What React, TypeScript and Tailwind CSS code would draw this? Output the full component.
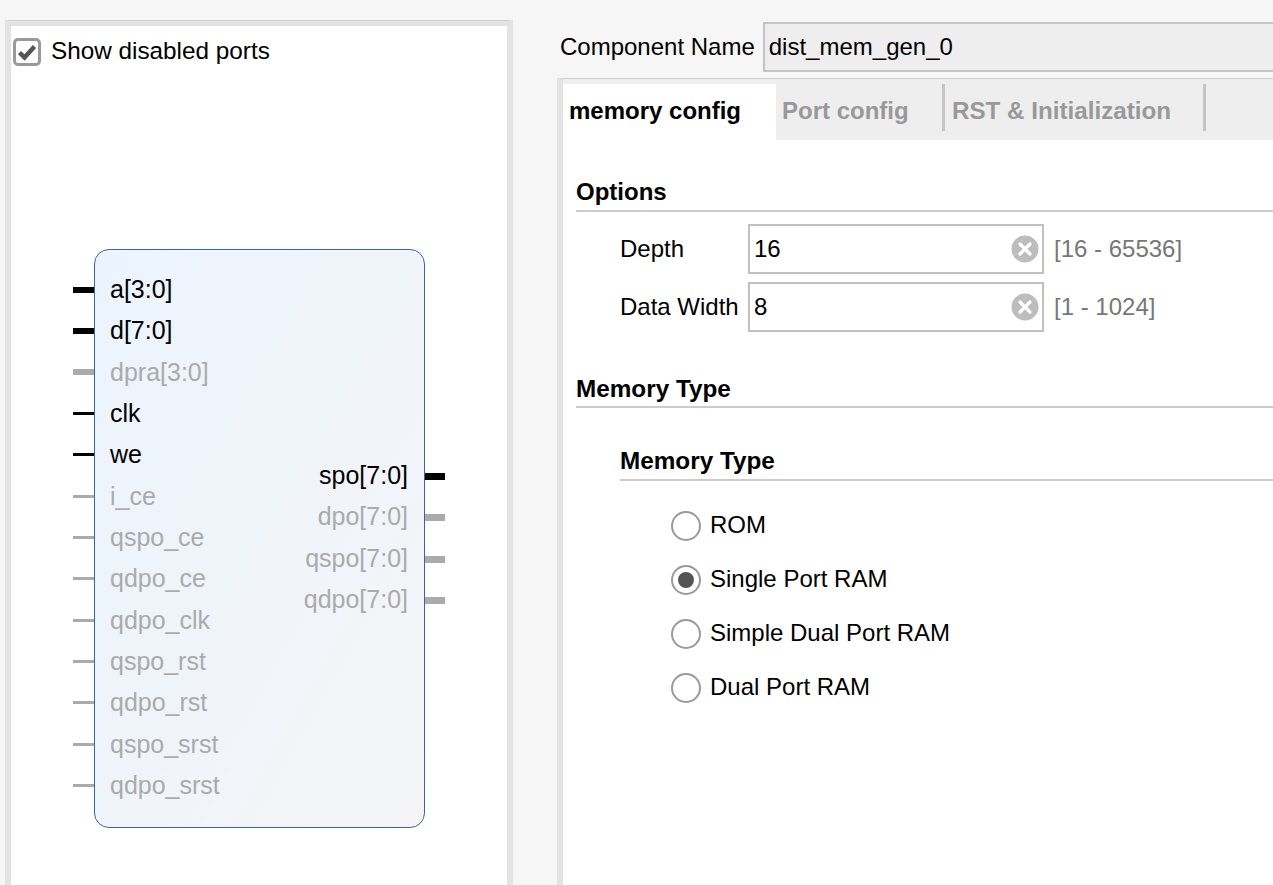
const leftPorts = [
  { name: "a[3:0]", on: true, bus: true },
  { name: "d[7:0]", on: true, bus: true },
  { name: "dpra[3:0]", on: false, bus: true },
  { name: "clk", on: true, bus: false },
  { name: "we", on: true, bus: false },
  { name: "i_ce", on: false, bus: false },
  { name: "qspo_ce", on: false, bus: false },
  { name: "qdpo_ce", on: false, bus: false },
  { name: "qdpo_clk", on: false, bus: false },
  { name: "qspo_rst", on: false, bus: false },
  { name: "qdpo_rst", on: false, bus: false },
  { name: "qspo_srst", on: false, bus: false },
  { name: "qdpo_srst", on: false, bus: false },
];

const rightPorts = [
  { name: "spo[7:0]", on: true },
  { name: "dpo[7:0]", on: false },
  { name: "qspo[7:0]", on: false },
  { name: "qdpo[7:0]", on: false },
];

const radios = [
  { label: "ROM", checked: false },
  { label: "Single Port RAM", checked: true },
  { label: "Simple Dual Port RAM", checked: false },
  { label: "Dual Port RAM", checked: false },
];

const Pin = ({ on, size }: { on: boolean; size: string }) => (
  <div className="h-[41.33px] flex items-center">
    <div className={`${size} ${on ? "bg-black" : "bg-[#ababab]"}`} />
  </div>
);

const ValueField = ({ label, value, range }: { label: string; value: string; range: string }) => (
  <div className="flex items-center h-[50px]">
    <div className="w-[172px] pl-[44px] shrink-0 whitespace-nowrap">{label}</div>
    <div className="w-[296px] h-[50px] border-2 border-[#c0c0c0] bg-white flex items-center justify-between pl-[4px] pr-[3px]">
      <span>{value}</span>
      <svg width="28" height="28" viewBox="0 0 28 28">
        <circle cx="14" cy="14" r="13.5" fill="#bdbdbd" />
        <path d="M9 9L19 19M19 9L9 19" stroke="#fff" strokeWidth="3.2" strokeLinecap="round" />
      </svg>
    </div>
    <span className="ml-[10px] text-[#777777] whitespace-nowrap">{range}</span>
  </div>
);

const Radio = ({ label, checked }: { label: string; checked: boolean }) => (
  <div className="h-[54px] flex items-center">
    <div className="w-[30px] h-[30px] rounded-full border-2 border-[#999999] bg-white flex items-center justify-center">
      {checked && <div className="w-[16px] h-[16px] rounded-full bg-[#555555]" />}
    </div>
    <span className="ml-[9px] pb-[2px] whitespace-nowrap">{label}</span>
  </div>
);

export default function App() {
  return (
    <div className="w-[1273px] h-[885px] overflow-hidden bg-[#f6f6f6] flex text-[24px] text-black font-['Liberation_Sans',Arial,sans-serif]">
      {/* Symbol panel */}
      <div className="w-[513px] shrink-0 pt-[20px] pl-[5px]">
        <div className="h-[880px] border-t border-[#cfcfcf] border-l-[6px] border-l-[#e3e3e3] border-r-[6px] border-r-[#e3e3e3] bg-white">
          <div className="h-[5px] bg-[#e3e3e3]" />
          <div className="flex items-center pl-[2px] pt-[11px] h-[40px]">
            <div className="w-[28px] h-[28px] rounded-[5px] border-[3px] border-[#999999] flex items-center justify-center">
              <svg width="22" height="22" viewBox="0 0 22 22" className="shrink-0">
                <path d="M3.5 11.5L8.5 16.5L18.5 5.5" fill="none" stroke="#555555" strokeWidth="4.5" />
              </svg>
            </div>
            <span className="ml-[10px] text-[24.3px] whitespace-nowrap">Show disabled ports</span>
          </div>

          {/* Block with ports */}
          <div className="flex mt-[183px] ml-[62px]">
            <div className="pt-[20px]">
              {leftPorts.map((p) => (
                <Pin key={p.name} on={p.on} size={`w-[21px] ${p.bus ? "h-[6px]" : "h-[3px]"}`} />
              ))}
            </div>
            <div className="w-[331px] h-[579px] rounded-[15px] border border-[#3f62a6] bg-gradient-to-br from-[#ebf4fe] to-[#f5f5f6] flex justify-between pt-[19px] px-[15px] text-[25px]">
              <div>
                {leftPorts.map((p) => (
                  <div
                    key={p.name}
                    className={`h-[41.33px] flex items-center ${p.on ? "text-black" : "text-[#ababab]"}`}
                  >
                    {p.name}
                  </div>
                ))}
              </div>
              <div className="pt-[186px] pr-[1px] text-right">
                {rightPorts.map((p) => (
                  <div
                    key={p.name}
                    className={`h-[41.33px] flex items-center justify-end ${p.on ? "text-black" : "text-[#ababab]"}`}
                  >
                    {p.name}
                  </div>
                ))}
              </div>
            </div>
            <div className="pt-[207px]">
              {rightPorts.map((p) => (
                <Pin key={p.name} on={p.on} size="w-[20px] h-[7px]" />
              ))}
            </div>
          </div>
        </div>
      </div>

      {/* Config side */}
      <div className="flex-1 min-w-0 pl-[44px] pt-[22px]">
        <div className="flex items-center h-[50px] pl-[3px]">
          <span className="whitespace-nowrap">Component Name</span>
          <div className="ml-[8px] flex-1 h-[50px] border-2 border-r-0 border-[#c4c4c4] bg-[#eeeeee] flex items-center pl-[4px]">
            dist_mem_gen_0
          </div>
        </div>

        <div className="mt-[6px] h-[820px] border-t border-[#cfcfcf] border-l-[6px] border-l-[#e3e3e3] bg-white">
          <div className="h-[5px] bg-[#eeeeee]" />
          <div className="h-[56px] bg-[#eeeeee] flex font-bold text-[#999999]">
            <div className="w-[213px] bg-white text-black pl-[6px] pt-[9px]">memory config</div>
            <div className="w-[169px] pl-[6px] pt-[9px] h-[47px] border-r-[3px] border-[#c4c4c4] whitespace-nowrap">
              Port config
            </div>
            <div className="w-[261px] pl-[7px] pt-[9px] h-[47px] border-r-[3px] border-[#c4c4c4] text-[24.2px] whitespace-nowrap">
              RST &amp; Initialization
            </div>
          </div>

          <div className="pl-[13px]">
            <div className="mt-[37px] h-[35px] border-b-2 border-[#cccccc] font-bold leading-[30px]">Options</div>
            <div className="mt-[12px] flex flex-col gap-[8px]">
              <ValueField label="Depth" value="16" range="[16 - 65536]" />
              <ValueField label="Data Width" value="8" range="[1 - 1024]" />
            </div>

            <div className="mt-[43px] h-[33px] border-b-2 border-[#cccccc] font-bold text-[24.3px] leading-[28px]">Memory Type</div>
            <div className="pl-[44px]">
              <div className="mt-[38px] h-[35px] border-b-2 border-[#cccccc] font-bold text-[24.3px] leading-[30px]">Memory Type</div>
              <div className="mt-[18px] pl-[51px]">
                {radios.map((r) => (
                  <Radio key={r.label} label={r.label} checked={r.checked} />
                ))}
              </div>
            </div>
          </div>
        </div>
      </div>
    </div>
  );
}
